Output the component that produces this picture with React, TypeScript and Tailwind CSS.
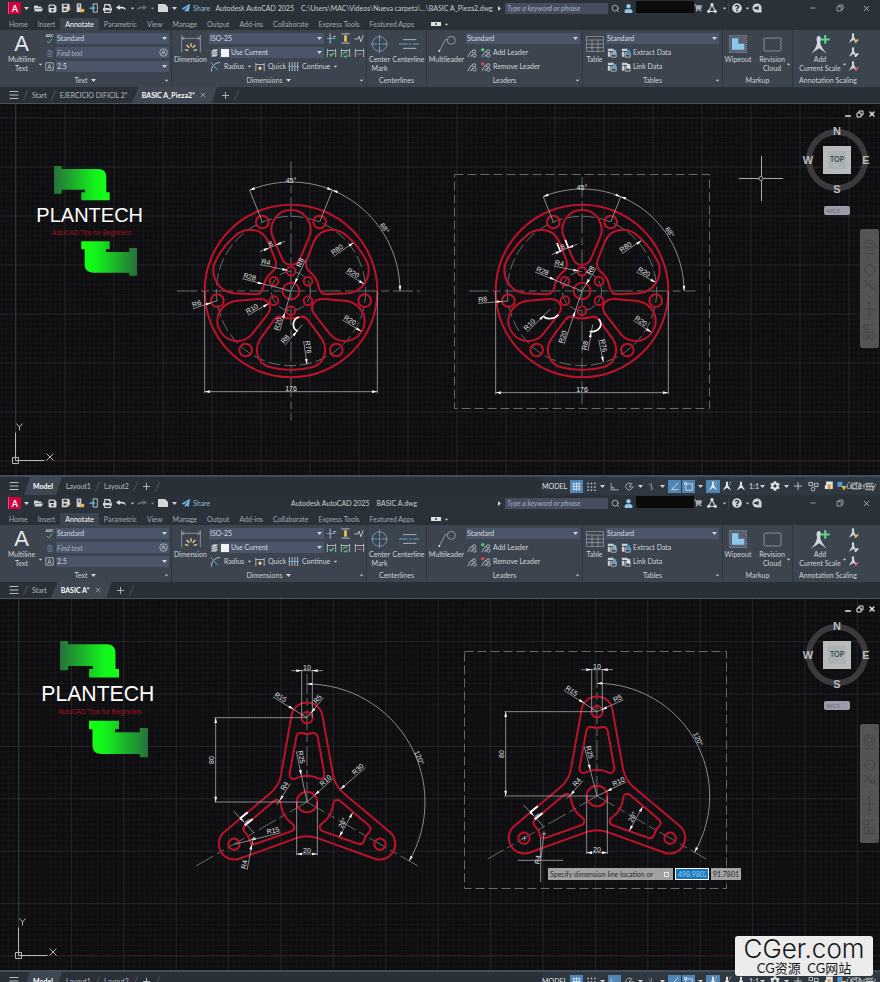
import type { ReactNode } from "react";
import clsx from "clsx";
import {
  FaCog,
  FaFolderOpen,
  FaPaperPlane,
  FaPrint,
  FaQuestionCircle,
  FaSave,
  FaShoppingCart,
  FaUser,
} from "react-icons/fa";
import { Menu, Minus, Plus, Search, X } from "lucide-react";

type Pt = [number, number];

interface LeaderSpec {
  label: string;
  tail: Pt;
  head: Pt;
  to?: Pt;
}

/* ---------- small shared bits ---------- */

function Caret({ className }: { className?: string }) {
  return (
    <svg viewBox="0 0 10 6" className={clsx("w-[5px] h-[3px] shrink-0 fill-[#cfd3d8]", className)}>
      <path d="M0 0h10L5 6z" />
    </svg>
  );
}

function Slash() {
  return <span className="w-px h-[11px] mx-0.5 bg-[#4a525d] rotate-[24deg] shrink-0" />;
}

function Glyph({ children, className }: { children: ReactNode; className?: string }) {
  return (
    <svg
      viewBox="0 0 24 24"
      className={clsx("shrink-0 fill-none stroke-[#c3c8ce] stroke-2", className ?? "w-[11px] h-[11px]")}
    >
      {children}
    </svg>
  );
}

function IconButton({ label, className, children }: { label: string; className?: string; children: ReactNode }) {
  return (
    <button type="button" aria-label={label} className={clsx("flex items-center justify-center shrink-0", className)}>
      {children}
    </button>
  );
}

function Combo({ label, value, className }: { label: string; value: string; className?: string }) {
  return (
    <div className={clsx("relative h-[11px]", className)}>
      <select aria-label={label} className="block appearance-none w-full h-[11px] pl-px leading-[11px] bg-[#4b556a] text-[#d5d9df]">
        <option>{value}</option>
      </select>
      <Caret className="absolute right-[2px] top-1 pointer-events-none" />
    </div>
  );
}

/* ---------- title bar ---------- */

function CurvedArrow({ className }: { className: string }) {
  return (
    <svg viewBox="0 0 24 14" className={clsx("w-[10px] h-[6px]", className)}>
      <path d="M0 6L9 0v4h5c6 0 9 3 10 9-3-4-6-5-10-5H9v4z" />
    </svg>
  );
}

function TitleBar({ file }: { file: string }) {
  return (
    <header className="flex items-center h-4 bg-[#2b3139] text-[#c9cdd2]">
      <IconButton label="Application menu" className="w-[13px] h-[12px] ml-2 bg-[#d3003f] border-l border-[#f04478]">
        <span className="text-[9px] leading-none font-bold text-white">A</span>
      </IconButton>
      <Caret className="mx-[3px]" />
      <div className="flex w-[96px] text-[9px] text-[#d4d7da]">
        <IconButton label="Open" className="flex-1"><FaFolderOpen /></IconButton>
        <IconButton label="Save" className="flex-1"><FaSave /></IconButton>
        <IconButton label="Save as" className="flex-1">
          <Glyph className="w-[10px] h-[10px]">
            <path className="fill-[#d4d7da] stroke-none" d="M2 2h16l3 3v8l-8 9H2z" />
            <path className="fill-[#2b3139] stroke-none" d="M6 4h9v5H6zM6 13h7v5H6z" />
            <path className="stroke-[#e0b45c] stroke-4" d="M14 21l8-8" />
          </Glyph>
        </IconButton>
        <IconButton label="Open from web" className="flex-1">
          <Glyph className="w-[10px] h-[10px]">
            <path className="fill-[#c9cdd1] stroke-none" d="M4 1h11v21H4z" />
            <path className="stroke-[#2b3139]" d="M7 5h5M7 9h5" />
            <path className="fill-[#e0b45c] stroke-none" d="M12 14h10v8H12z" />
          </Glyph>
        </IconButton>
        <IconButton label="Save to mobile" className="flex-1">
          <Glyph className="w-[10px] h-[10px]">
            <path className="stroke-[#d4d7da]" d="M10 2h10v20H10z" />
            <path className="stroke-[#62b6e8] stroke-3" d="M1 12h12M9 8l4 4-4 4" />
          </Glyph>
        </IconButton>
        <IconButton label="Plot" className="flex-1"><FaPrint /></IconButton>
        <IconButton label="Undo" className="flex-1"><CurvedArrow className="fill-[#e0e2e5]" /></IconButton>
      </div>
      <span className="flex justify-center w-2"><Caret className="scale-75" /></span>
      <IconButton label="Redo" className="w-3"><CurvedArrow className="fill-[#666d76] -scale-x-100" /></IconButton>
      <span className="flex justify-center w-2"><Caret className="scale-75 opacity-60" /></span>
      <IconButton label="Sheet set" className="w-[13px]">
        <svg viewBox="0 0 20 16" className="w-[10px] h-2 fill-[#d4d7da]"><path d="M0 0h14l6 6v10H0z" /></svg>
      </IconButton>
      <span className="flex justify-center w-[10px]"><Caret /></span>
      <button type="button" className="flex items-center gap-[3px] ml-[3px] text-[#8fb8d6]">
        <FaPaperPlane className="text-[8px] text-[#6cb9ea]" />
        Share
      </button>
      <h1 className="flex-1 flex justify-center gap-[7px] whitespace-nowrap">
        <span>Autodesk AutoCAD 2025</span>
        <span>{file}</span>
      </h1>
      <svg viewBox="0 0 6 10" className="w-[3px] h-[5px] mr-1 fill-[#cfd3d8]"><path d="M0 0l6 5-6 5z" /></svg>
      <input
        aria-label="Search help"
        placeholder="Type a keyword or phrase"
        className="w-[103px] h-[11px] pl-0.5 bg-[#444e60] italic placeholder:text-[#a9b0bb]"
      />
      <IconButton label="Search" className="w-[14px]"><Search className="w-[9px] h-[9px]" /></IconButton>
      <IconButton label="Account" className="w-[13px] text-[9px] text-[#8cc8ec]"><FaUser /></IconButton>
      <span className="w-[58px] h-3 ml-px mb-0.5 bg-[#0b0b0c]" />
      <IconButton label="App store" className="w-2 text-[8px] text-[#a7acb3]"><FaShoppingCart /></IconButton>
      <IconButton label="Autodesk apps" className="w-[20px]">
        <Glyph className="w-[10px] h-[10px]">
          <path className="stroke-3" d="M12 4L4 20h16z" />
          <path className="fill-[#d4d7da] stroke-none" d="M12 0a4 4 0 010 8 4 4 0 010-8zM4 16a4 4 0 010 8 4 4 0 010-8zM20 16a4 4 0 010 8 4 4 0 010-8z" />
        </Glyph>
      </IconButton>
      <Caret className="scale-75" />
      <span className="w-px h-[11px] mx-px bg-[#3c434d]" />
      <IconButton label="Help" className="w-[13px] text-[10px] text-[#d0d3d7]"><FaQuestionCircle /></IconButton>
      <span className="flex justify-center w-2"><Caret className="scale-75" /></span>
      <IconButton label="Feedback" className="w-[12px]">
        <Glyph className="w-[10px] h-[10px]">
          <path className="fill-[#d0d3d7] stroke-none" d="M12 1a11 11 0 0111 11v11H12A11 11 0 0112 1z" />
          <path className="fill-[#2b3139] stroke-none" d="M5 11l11-4v10l-11-3z" />
        </Glyph>
      </IconButton>
      <div className="flex ml-9">
        <IconButton label="Minimize" className="w-[27px]"><Minus className="w-2 h-2" /></IconButton>
        <IconButton label="Restore" className="w-[27px]">
          <Glyph className="w-2 h-2"><path d="M3 8h13v13H3zM8 8V3h13v13h-5" /></Glyph>
        </IconButton>
        <IconButton label="Close" className="w-[27px]"><X className="w-[9px] h-[9px]" /></IconButton>
      </div>
    </header>
  );
}

/* ---------- ribbon ---------- */

const RIBBON_TABS = [
  "Home", "Insert", "Annotate", "Parametric", "View", "Manage", "Output",
  "Add-ins", "Collaborate", "Express Tools", "Featured Apps",
];

function RibbonTabs() {
  return (
    <nav className="flex items-end h-[14px] pl-1 bg-[#2b3139] text-[#a3a9b1]">
      {RIBBON_TABS.map((tab) => (
        <button
          key={tab}
          type="button"
          className={clsx(
            "h-3 px-[5px] leading-3 whitespace-nowrap",
            tab === "Annotate" && "bg-[#3b444f] text-white",
          )}
        >
          {tab}
        </button>
      ))}
      <IconButton label="Ribbon display" className="h-3 ml-3 gap-[3px]">
        <span className="flex items-center justify-center w-[10px] h-1 bg-[#dfe2e5]">
          <span className="w-0.5 h-0.5 bg-[#59616c]" />
        </span>
        <Caret className="scale-75" />
      </IconButton>
    </nav>
  );
}

interface PanelProps {
  title: string;
  className: string;
  caret?: boolean;
  launcher?: boolean;
  children: ReactNode;
}

function Panel({ title, className, caret, launcher, children }: PanelProps) {
  return (
    <section className={clsx("flex flex-col border-r border-[#2f363f] shrink-0", className)}>
      <div className="flex flex-1 pt-[3px]">{children}</div>
      <footer className="relative flex items-center justify-center gap-1 h-[13px] text-[#cdd1d6]">
        {title}
        {caret && <Caret />}
        {launcher && <Caret className="absolute right-[2px] top-[5px] scale-75" />}
      </footer>
    </section>
  );
}

function BigButton({ lines, icon, className, caret }: { lines: string[]; icon: ReactNode; className: string; caret?: boolean }) {
  return (
    <button type="button" className={clsx("relative flex flex-col items-center shrink-0 text-[#d0d4d9]", className)}>
      <span className="flex items-center justify-center h-[22px]">{icon}</span>
      {lines.map((line) => (
        <span key={line} className="leading-[9px] whitespace-nowrap">{line}</span>
      ))}
      {caret && <Caret className="absolute right-0 top-[30px] scale-75" />}
    </button>
  );
}

function DimIcon({ mark, tone }: { mark: string; tone: string }) {
  return (
    <Glyph className="w-[11px] h-[10px]">
      <path d="M2 2v20M22 2v20M2 6h20" />
      <path className={tone} d={mark} />
    </Glyph>
  );
}

function LeaderIcon({ accent }: { accent?: string }) {
  return (
    <Glyph className="w-[10px] h-[10px]">
      <path d="M2 22L9 9h4M9 22l3-6h2" />
      <circle cx="17" cy="8" r="4" />
      <circle cx="18" cy="18" r="4" />
      {accent && <circle cx="4" cy="4" r="4" className={clsx("stroke-none", accent)} />}
    </Glyph>
  );
}

function TableIcon({ accent }: { accent: string }) {
  return (
    <Glyph className="w-[10px] h-[10px]">
      <path className="fill-[#c9cdd2] stroke-none" d="M2 2h14v5H2zM2 9h6v12H2z" />
      <path d="M10 11h12v11H10zM10 15h12" />
      <path className={clsx("stroke-none", accent)} d="M14 5h8v10h-8z" />
    </Glyph>
  );
}

function ScaleIcon({ tone }: { tone: string }) {
  return (
    <Glyph>
      <path className="fill-[#d0d4d9] stroke-none" d="M11 0c3 0 3 5 2 8l7 13-8-6-10 6 7-12c-1-4-1-9 2-9z" />
      <path className={clsx("stroke-4", tone)} d="M15 21l7-7" />
    </Glyph>
  );
}

function Ribbon() {
  return (
    <div className="flex h-[57px] bg-[#3b444f] text-[#d0d4d9] overflow-hidden">
      <Panel title="Text" className="w-[172px]" caret launcher>
        <BigButton
          className="w-[43px]"
          lines={["Multiline", "Text"]}
          caret
          icon={<span className="text-[22px] leading-[22px] font-['Liberation_Sans',sans-serif] text-[#e3e5e8]">A</span>}
        />
        <div className="flex flex-col flex-1 gap-[3px] pr-0.5">
          <div className="flex items-center">
            <IconButton label="Check spelling" className="w-[13px]">
              <span className="flex flex-col items-center">
                <span className="text-[4px] leading-[4px] font-bold">ABC</span>
                <Glyph className="w-[7px] h-[6px]"><path className="stroke-[#52c46b] stroke-4" d="M2 12l7 8L22 3" /></Glyph>
              </span>
            </IconButton>
            <Combo label="Text style" value="Standard" className="flex-1" />
          </div>
          <div className="flex items-center">
            <IconButton label="Find" className="w-[13px]">
              <Glyph className="w-2 h-[10px]">
                <path className="stroke-[#6f99b8]" d="M6 6h12v17H6zM10 1v5" />
                <path className="stroke-[#8d96a1]" d="M9 12h6M9 17h6" />
              </Glyph>
            </IconButton>
            <div className="flex items-center flex-1 h-[11px] bg-[#4b556a]">
              <input aria-label="Find text" placeholder="Find text" className="flex-1 min-w-0 h-[11px] pl-px italic placeholder:text-[#a8afbb]" />
              <Glyph className="w-[9px] h-[9px] mr-px">
                <circle cx="12" cy="12" r="10" />
                <path d="M7 17l5-11 5 11M9 13h6" />
              </Glyph>
            </div>
          </div>
          <div className="flex items-center">
            <IconButton label="Text height" className="w-[13px]">
              <Glyph className="w-[9px] h-[9px]"><path d="M2 2h20v20H2zM7 19l5-13 5 13M9 15h6" /></Glyph>
            </IconButton>
            <Combo label="Annotation text height" value="2.5" className="flex-1" />
          </div>
        </div>
      </Panel>

      <Panel title="Dimensions" className="w-[195px]" caret launcher>
        <BigButton
          className="w-[37px]"
          lines={["Dimension"]}
          icon={
            <svg viewBox="0 0 60 54" className="w-[20px] h-[18px] fill-none stroke-[#aeb4bb] stroke-2">
              <path d="M2 0v52M58 0v52M2 10h56M10 5l-8 5 8 5M50 5l8 5-8 5" />
              <path className="stroke-[#f0cf86] stroke-4" d="M12 44l10 2M17 30l8 8M30 25v10M43 30l-8 8M48 44l-10 2" />
            </svg>
          }
        />
        <div className="flex flex-col gap-[3px]">
          <div className="flex items-center">
            <Combo label="Dimension style" value="ISO-25" className="w-[115px]" />
            <div className="flex w-[41px] ml-px">
              <IconButton label="Break" className="flex-1"><Glyph><path d="M9 1v22M15 8h7" /><path className="stroke-[#67aee0]" d="M2 12h18" /></Glyph></IconButton>
              <IconButton label="Adjust space" className="flex-1"><Glyph><path d="M3 2h18M3 22h18" /><path className="stroke-[#e6c052] stroke-6" d="M12 5v14" /></Glyph></IconButton>
              <IconButton label="Jog line" className="flex-1"><Glyph><path d="M1 13h7l3-6 4 12 5-14" /></Glyph></IconButton>
            </div>
          </div>
          <div className="flex items-center">
            <span className="flex justify-center w-[10px]">
              <Glyph className="w-[9px] h-[9px]"><path className="fill-[#d0d4d9] stroke-[#59626e] stroke-1" d="M2 23l6-7h14l-6 7zM2 17l6-7h14l-6 7zM2 11l6-8h14l-6 8z" /></Glyph>
            </span>
            <span className="w-[11px] h-[11px] p-0.5 bg-[#4b556a]"><span className="block w-2 h-2 bg-[#f1f1ef]" /></span>
            <Combo label="Dimension layer" value="Use Current" className="w-[94px]" />
            <div className="flex w-[41px] ml-px">
              <IconButton label="Inspect" className="flex-1"><DimIcon tone="stroke-[#59c374] stroke-3" mark="M7 14l4 5 7-8" /></IconButton>
              <IconButton label="Update" className="flex-1"><DimIcon tone="stroke-[#59c374] stroke-3" mark="M7 15a5 5 0 019-3M17 16a5 5 0 01-9 3" /></IconButton>
              <IconButton label="Reassociate" className="flex-1"><DimIcon tone="stroke-[#a86a70] stroke-3" mark="M7 15h10" /></IconButton>
            </div>
          </div>
          <div className="flex items-center h-[11px]">
            <button type="button" className="flex items-center gap-[3px] pl-px w-[38px]">
              <Glyph><path d="M3 23C3 13 9 4 22 3" /><path className="stroke-[#67aee0]" d="M2 3l15 17" /></Glyph>
              Radius
            </button>
            <Caret className="scale-75" />
            <button type="button" className="flex items-center gap-[3px] pl-[3px] w-[36px]">
              <Glyph className="w-[10px] h-[10px]"><path d="M2 2v20M22 2v20M2 6h20" /><path className="stroke-[#f0cf86] stroke-4" d="M12 11v8M8 15h8" /></Glyph>
              Quick
            </button>
            <button type="button" className="flex items-center gap-[3px] w-[45px]">
              <Glyph><path d="M3 2v20M9 2v20M15 2v20M21 2v20" /><path className="stroke-[#67aee0]" d="M0 12h24" /></Glyph>
              Continue
            </button>
            <Caret className="scale-75" />
          </div>
        </div>
      </Panel>

      <Panel title="Centerlines" className="w-[60px]">
        <BigButton
          className="w-[25px]"
          lines={["Center", "Mark"]}
          icon={
            <svg viewBox="0 0 50 54" className="w-[17px] h-[18px] fill-none stroke-[#a9b0b8] stroke-2">
              <circle cx="25" cy="27" r="22" />
              <path className="stroke-[#62a3cf] stroke-3" d="M25 0v20M25 34v20M0 27h18M32 27h18M21 27h8M25 23v8" />
            </svg>
          }
        />
        <BigButton
          className="w-[33px]"
          lines={["Centerline"]}
          icon={
            <svg viewBox="0 0 60 54" className="w-[20px] h-[18px] fill-none stroke-[#a9b0b8] stroke-3">
              <path d="M12 14h40M12 40h40" />
              <path className="stroke-[#62a3cf]" d="M0 27h26M30 27h6M40 27h20" />
            </svg>
          }
        />
      </Panel>

      <Panel title="Leaders" className="w-[156px]" launcher>
        <BigButton
          className="w-[39px]"
          lines={["Multileader"]}
          icon={
            <svg viewBox="0 0 54 54" className="w-[18px] h-[18px] fill-none stroke-[#b9bfc6] stroke-2">
              <circle cx="40" cy="16" r="12" />
              <path d="M4 48L22 14h6" />
              <circle cx="4" cy="48" r="3" className="fill-[#e3e5e8] stroke-none" />
            </svg>
          }
        />
        <div className="flex flex-col gap-[3px]">
          <Combo label="Leader style" value="Standard" className="w-[114px]" />
          <div className="flex items-center h-[11px] pl-px">
            <IconButton label="Align" className="w-[14px] pr-1"><LeaderIcon /></IconButton>
            <button type="button" className="flex items-center gap-0.5"><LeaderIcon accent="fill-[#4fd07c]" />Add Leader</button>
          </div>
          <div className="flex items-center h-[11px] pl-px">
            <IconButton label="Collect" className="w-[14px] pr-1"><LeaderIcon /></IconButton>
            <button type="button" className="flex items-center gap-0.5"><LeaderIcon accent="fill-[#e0455c]" />Remove Leader</button>
          </div>
        </div>
      </Panel>

      <Panel title="Tables" className="w-[140px]" launcher>
        <BigButton
          className="w-[23px]"
          lines={["Table"]}
          icon={
            <svg viewBox="0 0 54 48" className="w-[18px] h-4 fill-none stroke-[#aab0b7] stroke-2">
              <path d="M1 1h52v46H1zM1 12h52M1 24h52M1 35h52M18 12v35M36 12v35" />
            </svg>
          }
        />
        <div className="flex flex-col gap-[3px]">
          <Combo label="Table style" value="Standard" className="w-[113px]" />
          <div className="flex items-center h-[11px] pl-px">
            <IconButton label="Download from source" className="w-[14px] pr-1"><TableIcon accent="fill-[#7db6dc]" /></IconButton>
            <button type="button" className="flex items-center gap-0.5"><TableIcon accent="fill-[#3f8fca]" />Extract Data</button>
          </div>
          <div className="flex items-center h-[11px] pl-px">
            <IconButton label="Upload to source" className="w-[14px] pr-1"><TableIcon accent="fill-[#5c9fd0]" /></IconButton>
            <button type="button" className="flex items-center gap-0.5"><TableIcon accent="fill-[#e1e3e6]" />Link Data</button>
          </div>
        </div>
      </Panel>

      <Panel title="Markup" className="w-[70px]">
        <BigButton
          className="w-[30px]"
          lines={["Wipeout"]}
          icon={
            <svg viewBox="0 0 54 54" className="w-[18px] h-[18px]">
              <rect x="1" y="1" width="52" height="52" className="fill-[#59626d] stroke-[#a9b0b8] stroke-2 [stroke-dasharray:3_3]" />
              <path className="fill-[#8ac6ee]" d="M9 10h19v16h18v18H9z" />
            </svg>
          }
        />
        <BigButton
          className="w-[38px]"
          lines={["Revision", "Cloud"]}
          caret
          icon={
            <svg viewBox="0 0 56 44" className="w-[19px] h-[15px] fill-none stroke-[#b4bac1] stroke-2">
              <path d="M4 4q4-4 8 0q4-4 8 0q4-4 8 0q4-4 8 0q4-4 8 0q4-4 8 0q4 4 0 9q4 4 0 9q4 4 0 9q4 4 0 9q-4 4-8 0q-4 4-8 0q-4 4-8 0q-4 4-8 0q-4 4-8 0q-4 4-8 0q-4-4 0-9q-4-4 0-9q-4-4 0-9q-4-4 0-9z" />
            </svg>
          }
        />
      </Panel>

      <section className="flex flex-col w-[70px]">
        <div className="flex flex-1 pt-[3px]">
          <BigButton
            className="w-[54px]"
            lines={["Add", "Current Scale"]}
            caret
            icon={
              <svg viewBox="0 0 56 56" className="w-[19px] h-[19px]">
                <path className="fill-[#d4d7da]" d="M23 3c7 0 8 9 4 18 3 12 8 21 20 34L24 39 0 55c12-13 16-22 18-34-3-9-2-18 5-18z" />
                <path className="stroke-[#5cd88a] stroke-[6px]" d="M42 0v26M29 13h26" />
              </svg>
            }
          />
          <div className="flex flex-col gap-[3px] pl-px">
            <IconButton label="Scale list" className="h-[11px]"><ScaleIcon tone="stroke-[#e6b558]" /></IconButton>
            <IconButton label="Sync scales" className="h-[11px]"><ScaleIcon tone="stroke-[#e3e5e8]" /></IconButton>
            <IconButton label="Delete scales" className="h-[11px]"><ScaleIcon tone="stroke-[#d8556a]" /></IconButton>
          </div>
        </div>
        <footer className="flex items-center justify-center h-[13px] whitespace-nowrap">Annotation Scaling</footer>
      </section>
    </div>
  );
}

/* ---------- drawing tabs ---------- */

function FileTabs({ files, active }: { files: string[]; active: string }) {
  return (
    <nav className="flex items-center h-[17px] border-b border-[#4a525c] bg-[#2a3038] text-[#b4bac1]">
      <IconButton label="File tab menu" className="w-[23px] pl-1"><Menu className="w-3 h-3" /></IconButton>
      <Slash />
      <button type="button" className="px-1">Start</button>
      {files.map((file) => (
        <span key={file} className="flex items-center h-full">
          <Slash />
          <button type="button" className="px-1">{file}</button>
        </span>
      ))}
      <span className="flex items-center self-stretch gap-1 px-2.5 bg-[#3f4852] [clip-path:polygon(7px_0,100%_0,calc(100%-5px)_100%,0_100%)]">
        <button type="button" className="font-bold text-white">{active}</button>
        <IconButton label="Close tab"><X className="w-2 h-2" /></IconButton>
      </span>
      <IconButton label="New tab" className="w-[17px]"><Plus className="w-[11px] h-[11px]" /></IconButton>
      <Slash />
    </nav>
  );
}

/* ---------- drafting primitives, three units to the pixel ---------- */

const heading = (a: Pt, b: Pt) => (Math.atan2(b[1] - a[1], b[0] - a[0]) * 180) / Math.PI;

function Arrow({ at, angle }: { at: Pt; angle: number }) {
  return <path d="M0 0l-16-4v8z" className="fill-white stroke-none" transform={`translate(${at[0]} ${at[1]}) rotate(${angle})`} />;
}

function Label({ at, angle = 0, children }: { at: Pt; angle?: number; children: ReactNode }) {
  return (
    <text
      textAnchor="middle"
      transform={`translate(${at[0]} ${at[1]}) rotate(${angle})`}
      className="text-[21px] font-['Liberation_Sans',sans-serif] fill-[#e2e3e5] stroke-none"
    >
      {children}
    </text>
  );
}

function Line({ a, b, className }: { a: Pt; b: Pt; className?: string }) {
  return <line x1={a[0]} y1={a[1]} x2={b[0]} y2={b[1]} className={className} />;
}

function Leader({ label, tail, head, to }: LeaderSpec) {
  const angle = heading(tail, head);
  const rad = (angle * Math.PI) / 180;
  const upright = angle > 90 ? angle - 180 : angle < -90 ? angle + 180 : angle;
  const up = (upright * Math.PI) / 180;
  const reach = label.length > 2 ? 20 : 15;
  const at: Pt = [
    tail[0] + Math.cos(rad) * reach + Math.sin(up) * 4,
    tail[1] + Math.sin(rad) * reach - Math.cos(up) * 4,
  ];
  return (
    <g>
      <Line a={tail} b={to ?? head} />
      <Arrow at={head} angle={angle} />
      <Label at={at} angle={upright}>{label}</Label>
    </g>
  );
}

function Span({ a, b }: { a: Pt; b: Pt }) {
  return (
    <g>
      <Line a={a} b={b} />
      <Arrow at={a} angle={heading(b, a)} />
      <Arrow at={b} angle={heading(a, b)} />
    </g>
  );
}

const THIN = "fill-none stroke-[#a6a8ab] stroke-[2.4px]";
const RED = "fill-none stroke-[#bd1229] stroke-[6px]";
const AXIS = "stroke-[#7d8083] [stroke-dasharray:60_12_24_12]";
const RING = "stroke-[#7d8083] [stroke-dasharray:36_12]";

/* ---------- wheel ---------- */

const WHEEL_UPPER =
  "M47-93L68-147C80-175 98-184 124-184C142-183 158-175 168-165A243 243 0 0 1 231-80C240-40 215 3 171 7L108 10C92 10 86 0 84-9A85 85 0 0 0 52-62C44-70 44-82 47-93Z";
const WHEEL_LOWER =
  "M71 71C52 46 70 22 98 24L162 29C196 32 222 60 221 92C221 100 219 106 217 111C200 154 148 163 118 131Z";
const WHEEL_TOP = "M-27-97L-54-160A59 59 0 1 1 54-160L27-97A29 29 0 0 1-27-97Z";
const WHEEL_BOTTOM =
  "M-24 79A85 85 0 0 0 24 79C36 74 44 78 50 86L94 146C112 176 100 220 62 229A240 240 0 0 1-62 229C-100 220-112 176-94 146L-50 86C-44 78-36 74-24 79Z";

const BOLTS: Pt[] = [[-86, -207], [86, -207], [221, 29], [-221, 29], [136, 177], [-136, 177]];
const PINS: Pt[] = [[0, -59], [51, -29], [51, 29], [0, 59], [-51, 29], [-51, -29]];

interface WheelProps {
  x: number;
  y: number;
  arc: number;
  bottom: number;
  axes: [Pt, Pt, Pt, Pt];
  web: Pt;
  leaders: LeaderSpec[];
  marks: string[];
}

function Wheel({ x, y, arc, bottom, axes, web, leaders, marks }: WheelProps) {
  const ax = arc * 0.38;
  const ay = -arc * 0.925;
  return (
    <g transform={`translate(${x} ${y}) scale(${1 / 3})`}>
      <g className={THIN}>
        <Line a={axes[0]} b={axes[1]} className={AXIS} />
        <Line a={axes[2]} b={axes[3]} className={AXIS} />
        <circle r="224" className={RING} />
        <circle r="59" className={RING} />
      </g>
      <g className={RED}>
        <circle r="259" />
        <circle r="25" />
        {BOLTS.map(([cx, cy]) => <circle key={`${cx},${cy}`} cx={cx} cy={cy} r="19" />)}
        {PINS.map(([cx, cy]) => <circle key={`${cx},${cy}`} cx={cx} cy={cy} r="13" />)}
        <path d={WHEEL_TOP} />
        <path d={WHEEL_BOTTOM} />
        {[1, -1].map((side) => (
          <g key={side} transform={`scale(${side} 1)`}>
            <path d={WHEEL_UPPER} />
            <path d={WHEEL_LOWER} />
          </g>
        ))}
      </g>
      <g className={THIN}>
        <path d={`M${-ax} ${ay}A${arc} ${arc} 0 0 1 ${arc} 0`} />
        <Arrow at={[-ax, ay]} angle={160} />
        <Arrow at={[ax, ay]} angle={20} />
        <Arrow at={[ax, ay]} angle={200} />
        <Arrow at={[arc, 0]} angle={90} />
        <Line a={[-ax, ay]} b={[-86, -207]} />
        <Line a={[ax, ay]} b={[86, -207]} />
        <Label at={[0, -arc + 2]}>45°</Label>
        <Label at={[arc * 0.84, -arc * 0.565]} angle={56}>68°</Label>
        <Line a={[-259, 0]} b={[-259, bottom + 5]} />
        <Line a={[259, 0]} b={[259, bottom + 5]} />
        <Span a={[-259, bottom]} b={[259, bottom]} />
        <Label at={[0, bottom - 3]}>176</Label>
        <g transform={`translate(${web[0]} ${web[1]})`}>
          <Line a={[-38, 15]} b={[38, -16]} />
          <Arrow at={[-10, 4]} angle={-22} />
          <Arrow at={[11, -5]} angle={158} />
          <Label at={[-2, -2]} angle={-22}>8</Label>
        </g>
        {leaders.map((l) => <Leader key={l.label + l.tail.join()} {...l} />)}
        {marks.map((d) => <path key={d} d={d} className="stroke-white stroke-[5px]" />)}
      </g>
    </g>
  );
}

const WHEEL_A: LeaderSpec[] = [
  { label: "R4", tail: [-92, -79], head: [-10, -62] },
  { label: "R28", tail: [-146, -37], head: [-84, -21], to: [0, 0] },
  { label: "R8", tail: [44, -94], head: [11, -22], to: [0, 0] },
  { label: "R20", tail: [-34, 121], head: [-19, 64], to: [0, 0] },
  { label: "R80", tail: [128, -104], head: [188, -145] },
  { label: "R20", tail: [163, -55], head: [219, -21] },
  { label: "R20", tail: [154, 87], head: [211, 121] },
  { label: "R6", tail: [-294, 53], head: [-239, 35], to: [-221, 29] },
  { label: "R10", tail: [-129, 73], head: [-68, 38] },
  { label: "R8", tail: [-19, 163], head: [18, 121], to: [34, 101] },
  { label: "R76", tail: [38, 150], head: [48, 220] },
];

const WHEEL_B: LeaderSpec[] = [
  { label: "R4", tail: [-85, -75], head: [-10, -60] },
  { label: "R28", tail: [-141, -57], head: [-81, -34], to: [0, 0] },
  { label: "R8", tail: [43, -69], head: [12, -20], to: [0, 0] },
  { label: "R20", tail: [-54, 160], head: [-20, 60], to: [0, 0] },
  { label: "R80", tail: [120, -112], head: [178, -151] },
  { label: "R20", tail: [163, -57], head: [221, -26] },
  { label: "R20", tail: [154, 88], head: [208, 124] },
  { label: "R6", tail: [-312, 37], head: [-240, 31], to: [-222, 30] },
  { label: "R10", tail: [-164, 123], head: [-114, 73], to: [-95, 54] },
  { label: "R8", tail: [18, 180], head: [27, 123], to: [32, 101] },
  { label: "R76", tail: [50, 146], head: [64, 213] },
];

/* ---------- three-arm bracket ---------- */

const ARM = "M-78-82L-46-261A47 47 0 0 1 46-261L78-82A95 95 0 0 0 110-26";
const POCKET =
  "M-32-195C-30-205-24-208-16-207Q0-202 16-207C24-208 30-205 32-195L52-86C54-72 44-66 34-71Q0-86-34-71C-44-66-54-72-52-86Z";

interface BracketProps {
  x: number;
  y: number;
  arc: number;
  tip: number;
  top: number;
  base: number;
  angleLabel: Pt;
  leaders: LeaderSpec[];
  children?: ReactNode;
}

function Bracket({ x, y, arc, tip, top, base, angleLabel, leaders, children }: BracketProps) {
  return (
    <g transform={`translate(${x} ${y}) scale(${1 / 3})`}>
      <g className={THIN}>
        <Line a={[0, 0]} b={[0, top]} className={AXIS} />
        <Line a={[0, 0]} b={[-tip, tip * 0.577]} className={AXIS} />
        <Line a={[0, 0]} b={[tip, tip * 0.577]} className={AXIS} />
      </g>
      <g className={RED}>
        <circle r="31" />
        {[0, 120, 240].map((turn) => (
          <g key={turn} transform={`rotate(${turn})`}>
            <path d={ARM} />
            <path d={POCKET} />
            <circle cy="-253" r="17" />
          </g>
        ))}
      </g>
      <g className={THIN}>
        <path d={`M0 ${-arc}A${arc} ${arc} 0 0 1 ${arc * 0.866} ${arc * 0.5}`} />
        <Arrow at={[0, -arc]} angle={180} />
        <Arrow at={[arc * 0.866, arc * 0.5]} angle={118} />
        <Label at={angleLabel} angle={66}>120°</Label>

        <Line a={[-16, top - 3]} b={[-16, -253]} />
        <Line a={[16, top - 3]} b={[16, -253]} />
        <Line a={[-47, top]} b={[48, top]} />
        <Arrow at={[-16, top]} angle={0} />
        <Arrow at={[16, top]} angle={180} />
        <Label at={[0, top - 3]}>10</Label>

        <Line a={[-278, -253]} b={[0, -253]} />
        <Line a={[-278, 0]} b={[0, 0]} />
        <Span a={[-274, -253]} b={[-274, 0]} />
        <Label at={[-278, -126]} angle={-90}>80</Label>

        <Line a={[-31, 0]} b={[-31, base + 4]} />
        <Line a={[31, 0]} b={[31, base + 4]} />
        <Span a={[-31, base]} b={[31, base]} />
        <Label at={[0, base - 3]}>20</Label>

        <Span a={[137, 32]} b={[97, 104]} />
        <Label at={[113, 66]} angle={-62}>20°</Label>

        <Line a={[-220, 27]} b={[-160, 92]} />
        <Arrow at={[-189, 60]} angle={47} />
        <path d="M-200 49l22-18M-187 70l24-19" className="stroke-white stroke-[6px]" />
        <Label at={[-183, 64]} angle={50}>8</Label>

        {leaders.map((l) => <Leader key={l.label + l.tail.join()} {...l} />)}
        {children}
      </g>
    </g>
  );
}

const BRACKET_A: LeaderSpec[] = [
  { label: "R15", tail: [-102, -315], head: [-40, -278], to: [0, -253] },
  { label: "R5", tail: [50, -313], head: [12, -267], to: [0, -253] },
  { label: "R25", tail: [-32, -152], head: [-17, -80], to: [0, 0] },
  { label: "R10", tail: [78, -70], head: [23, -21], to: [0, 0] },
  { label: "R30", tail: [175, -103], head: [100, -38] },
  { label: "R4", tail: [-50, -55], head: [-82, -4], to: [-90, 8] },
  { label: "R15", tail: [-80, 92], head: [-170, 113], to: [-218, 127] },
  { label: "R4", tail: [-180, 204], head: [-166, 127], to: [-160, 104] },
];

const BRACKET_B: LeaderSpec[] = [
  { label: "R15", tail: [-99, -317], head: [-39, -279], to: [0, -253] },
  { label: "R5", tail: [80, -289], head: [14, -259], to: [0, -253] },
  { label: "R25", tail: [-38, -148], head: [-20, -78], to: [0, 0] },
  { label: "R10", tail: [87, -42], head: [29, -14], to: [0, 0] },
  { label: "R4", tail: [-42, -46], head: [-80, -2], to: [-90, 8] },
];

/* ---------- model space ---------- */

function PipeLogo({ id, x, y, scale }: { id: string; x: number; y: number; scale: number }) {
  const pipe = "M0 0H23V9H132Q157 9 157 34V79H167V103H82V79H93V71H23V83H0Z";
  return (
    <g transform={`translate(${x} ${y}) scale(${scale / 3})`}>
      <defs>
        <linearGradient id={id}>
          <stop offset="0" stopColor="#26703a" />
          <stop offset="0.75" stopColor="#12f51a" />
          <stop offset="1" stopColor="#16ff16" />
        </linearGradient>
      </defs>
      <path d={pipe} fill={`url(#${id})`} />
      <path d={pipe} fill={`url(#${id})`} transform="translate(249 329) rotate(180)" />
      <text x="-53" y="169" className="text-[60px] font-['Liberation_Sans',sans-serif] fill-white">PLANTECH</text>
      <text x="-6" y="206" className="text-[19px] font-['Liberation_Sans',sans-serif] fill-[#a51226]">
        AutoCAD Tips for Beginners
      </text>
    </g>
  );
}

interface ModelSpaceProps {
  id: string;
  originX: number;
  originY: number;
  cell: number;
  children: ReactNode;
  overlay?: ReactNode;
}

function ModelSpace({ id, originX, originY, cell, children, overlay }: ModelSpaceProps) {
  const minor = cell / 10;
  return (
    <main className="relative h-[371px] bg-[#0e0e10] overflow-hidden">
      <svg className="block w-full h-full">
        <defs>
          <pattern id={`${id}-minor`} x={originX} y={originY} width={minor} height={minor} patternUnits="userSpaceOnUse">
            <path d={`M0 0H${minor}M0 0V${minor}`} className="fill-none stroke-[#1a1a1d] stroke-1" />
          </pattern>
          <pattern id={`${id}-major`} x={originX} y={originY} width={cell} height={cell} patternUnits="userSpaceOnUse">
            <path d={`M0 0H${cell}M0 0V${cell}`} className="fill-none stroke-[#313439] stroke-1" />
          </pattern>
        </defs>
        <rect width="100%" height="100%" fill={`url(#${id}-minor)`} />
        <rect width="100%" height="100%" fill={`url(#${id}-major)`} />
        <line x1={originX} y1="0" x2={originX} y2={originY} className="stroke-[#223a25]" />
        <line x1={originX} y1={originY} x2="100%" y2={originY} className="stroke-[#3d161b]" />
        <g transform={`translate(${originX} ${originY})`} className="fill-none stroke-[#b5b7b9]">
          <path d="M-3-3h6v6h-6zM0 0V-28M0 0H29" />
          <path d="M1-37l3 3.500l3-3.500M4-33.500V-30M31-7l7 7M38-7l-7 7" />
        </g>
        {children}
      </svg>

      <div className="absolute right-1 top-1 flex gap-1 text-[#e4e4e4]">
        <IconButton label="Minimize drawing" className="w-2 pt-1"><Minus className="w-2 h-2 stroke-5" /></IconButton>
        <IconButton label="Restore drawing" className="w-2">
          <Glyph className="w-2 h-2"><path className="stroke-[#e4e4e4] stroke-3" d="M3 9h12v12H3zM9 9V3h12v12h-6" /></Glyph>
        </IconButton>
        <IconButton label="Close drawing" className="w-2"><X className="w-2 h-2 stroke-4" /></IconButton>
      </div>
      <ViewCube />
      <NavigationBar />
      {overlay}
    </main>
  );
}

function ViewCube() {
  return (
    <div className="absolute right-[7px] top-5 flex flex-col items-center">
      <svg viewBox="0 0 72 72" className="w-[72px] h-[72px] font-['Liberation_Sans',sans-serif] font-bold">
        <circle cx="36" cy="36" r="28" className="fill-none stroke-[#3a3a3c] stroke-[6px]" />
        <path d="M22 22h28v28H22z" className="fill-[#b9babb]" />
        <path d="M27 27h18v18H27z" className="fill-[#aab2b2]" />
        <text x="36" y="38" textAnchor="middle" className="text-[7px] font-['Lato',sans-serif] fill-[#3b474c]">TOP</text>
        <g className="text-[11px] fill-[#b9babb]" textAnchor="middle">
          <text x="36" y="11">N</text>
          <text x="36" y="69">S</text>
          <text x="7" y="40">W</text>
          <text x="65" y="40">E</text>
        </g>
      </svg>
      <button type="button" className="w-[26px] h-[9px] mt-2.5 pr-2 rounded-[2px] bg-[#9c9ba9] text-[6px] leading-[9px] font-bold text-[#797886]">
        WCS
      </button>
    </div>
  );
}

function NavigationBar() {
  return (
    <div className="absolute right-px top-[125px] w-[19px] h-[119px] rounded-[2px] bg-[#545456]">
      <svg viewBox="0 0 57 357" className="w-full h-full fill-none stroke-[#434346] stroke-3">
        <circle cx="28" cy="49" r="16" />
        <circle cx="28" cy="49" r="8" />
        <path d="M10 74h36" />
        <path d="M14 125c0-20 24-22 30-8 4 12-6 24-18 22zM24 84h8" />
        <path d="M12 152l22 24M34 152L12 176" />
        <circle cx="38" cy="172" r="7" />
        <path d="M42 178l8 10M24 204h8" />
        <path d="M28 220v40M10 240h36M22 226l6-8 6 8M22 254l6 8 6-8M24 270h8" />
        <path d="M12 288h14v14H12zM32 288h12M12 310h30v20H12zM24 314l8 6-8 6zM46 12h6M44 348h8" />
      </svg>
    </div>
  );
}

/* ---------- layout tabs and status bar ---------- */

const TOGGLE = "w-[13px] h-[13px]";
const ON = "bg-[#4f86b5]";

function StatusBar({ ortho }: { ortho?: boolean }) {
  return (
    <footer className="flex items-center h-5 border-t-2 border-[#434c57] bg-[#2a3038] text-[#b9bec5]">
      <IconButton label="Layout menu" className="w-[24px] pl-[4px]"><Menu className="w-3 h-3" /></IconButton>
      <button type="button" className="self-stretch px-[9px] bg-[#3f4852] font-bold text-white [clip-path:polygon(6px_0,100%_0,calc(100%-6px)_100%,0_100%)]">
        Model
      </button>
      <button type="button" className="px-1">Layout1</button>
      <Slash />
      <button type="button" className="px-1">Layout2</button>
      <Slash />
      <IconButton label="New layout" className="w-[17px]"><Plus className="w-[11px] h-[11px]" /></IconButton>
      <Slash />

      <div className="relative flex items-center h-full ml-auto pr-1 bg-[#2f3740]">
        <button type="button" className="w-[28px] text-left text-[#dfe2e5]">MODEL</button>
        <IconButton label="Grid" className={clsx(TOGGLE, ON)}>
          <Glyph className="w-[9px] h-[9px]"><path className="stroke-[#e8eef3]" d="M5 1v22M12 1v22M19 1v22M1 5h22M1 12h22M1 19h22" /></Glyph>
        </IconButton>
        <IconButton label="Snap" className="w-[17px]">
          <Glyph className="w-[9px] h-[9px]"><path className="stroke-4 [stroke-dasharray:4_5]" d="M1 4h23M1 13h23M1 22h23" /></Glyph>
        </IconButton>
        <Caret className="mr-[3px]" />
        <IconButton label="Ortho" className={clsx(TOGGLE, ortho && ON)}>
          <Glyph className="w-[9px] h-[9px]"><path d="M3 2v19h20M3 14h7v7" /></Glyph>
        </IconButton>
        <IconButton label="Polar tracking" className="w-[17px]">
          <Glyph className="w-[9px] h-[9px]"><path d="M17 5A9 9 0 1 0 20 14M11 13h12M11 13L19 3" /></Glyph>
        </IconButton>
        <Caret />
        <IconButton label="Isodraft" className="w-[17px]">
          <Glyph className="w-[9px] h-[9px]"><path className="stroke-[#8c939b]" d="M12 1v22M4 4l14 16" /></Glyph>
        </IconButton>
        <Caret className="mr-[3px]" />
        <IconButton label="Object snap tracking" className={clsx(TOGGLE, ON)}>
          <Glyph className="w-[9px] h-[9px]"><path className="stroke-[#e8eef3]" d="M22 2L4 20h18" /></Glyph>
        </IconButton>
        <IconButton label="Object snap" className={clsx(TOGGLE, ON, "ml-px")}>
          <Glyph className="w-[9px] h-[9px]"><path className="stroke-[#e8eef3]" d="M5 5h17v17H5zM1 1h6v6H1z" /></Glyph>
        </IconButton>
        <Caret className="mx-[3px]" />
        {["Annotation visibility", "Auto scale", "Annotation scale"].map((name, i) => (
          <IconButton key={name} label={name} className={clsx("w-[14px] h-[13px]", i === 0 && ON)}>
            <Glyph className="w-[10px] h-[10px]">
              <path className="fill-[#e3e5e8] stroke-none" d="M12 1c3 0 3 5 2 8l8 14-10-7L2 23l8-14c-1-3-1-8 2-8z" />
              {i < 2 && <path d="M18 3h4M17 7l3 2" />}
            </Glyph>
          </IconButton>
        ))}
        <button type="button" className="flex items-center gap-px pl-px font-bold">1:1<Caret /></button>
        <IconButton label="Workspace" className="w-[19px] text-[10px] text-[#dfe2e5]"><FaCog /></IconButton>
        <Caret />
        <IconButton label="Annotation monitor" className="w-[17px]"><Plus className="w-3 h-3" /></IconButton>
        <IconButton label="Isolate objects" className="w-[15px]">
          <Glyph className="w-[11px] h-[11px]"><path d="M2 3h8v7H2zM14 5h8v7h-8z" /><circle cx="11" cy="18" r="4" /></Glyph>
        </IconButton>
        <IconButton label="Plot status" className="w-[15px]">
          <Glyph className="w-[10px] h-[10px]"><path className="fill-[#dfe2e5] stroke-none" d="M5 1h16v18H2V10h3z" /><path className="fill-[#e0973c] stroke-none" d="M9 8h7v12H9z" /></Glyph>
        </IconButton>
        <IconButton label="Graphics performance" className="w-[12px]">
          <Glyph className="w-[10px] h-[10px]"><path className="fill-[#4f9ad4] stroke-none" d="M1 2h12v12H1z" /><path className="fill-[#e0b843] stroke-none" d="M10 12h13l-6 11z" /></Glyph>
        </IconButton>
        <IconButton label="Clean screen" className="w-[15px]"><Glyph className="w-[10px] h-[10px]"><path d="M2 5h20v14H2z" /></Glyph></IconButton>
        <IconButton label="Customization" className="w-[13px]"><Menu className="w-[11px] h-[11px]" /></IconButton>
        <span className="absolute right-1 top-0.5 text-[10px] leading-3 text-[#d9dbdd]/80 pointer-events-none">ûdemy</span>
      </div>
    </footer>
  );
}

/* ---------- windows ---------- */

function WheelWindow() {
  return (
    <section>
      <TitleBar file="C:\Users\MAC\Videos\Nueva carpeta\...\BASIC A_Pieza2.dwg" />
      <RibbonTabs />
      <Ribbon />
      <FileTabs files={["EJERCICIO DIFICIL 2*"]} active="BASIC A_Pieza2*" />
      <ModelSpace id="wheel" originX={15.5} originY={356.5} cell={49}>
        <PipeLogo id="pipe-a" x={54} y={62} scale={1} />
        <Wheel
          x={291}
          y={187}
          arc={327}
          bottom={302}
          axes={[[0, -389], [0, 388], [-342, 0], [386, 0]]}
          web={[-56, -133]}
          leaders={WHEEL_A}
          marks={["M24 78C2 86 2 114 21 121"]}
        />
        <Wheel
          x={582}
          y={187}
          arc={306}
          bottom={305}
          axes={[[0, -341], [0, 340], [-340, 0], [340, 0]]}
          web={[-53, -124]}
          leaders={WHEEL_B}
          marks={["M-116 76C-105 87-82 84-71 71", "M51 84C66 106 46 126 23 121", "M-75-144l11 27", "M-50-154l9 25"]}
        />
        <rect x="454.500" y="70.500" width="255" height="234" className="fill-none stroke-[#66686b] [stroke-dasharray:9_4]" />
        <g className="fill-none stroke-[#a7a9ab]">
          <path d="M739 74.500h20M763 74.500h20M761.500 52v20M761.500 77v20" />
          <circle cx="761" cy="74.500" r="2" />
        </g>
      </ModelSpace>
      <StatusBar />
    </section>
  );
}

function BracketWindow() {
  return (
    <section>
      <TitleBar file="BASIC A.dwg" />
      <RibbonTabs />
      <Ribbon />
      <FileTabs files={[]} active="BASIC A*" />
      <ModelSpace
        id="bracket"
        originX={18.5}
        originY={356.5}
        cell={52.4}
        overlay={
          <div className="absolute left-[548px] top-[269px] flex items-center gap-0.5 h-3 leading-3">
            <label htmlFor="dim-x" className="flex items-center justify-between w-[125px] h-3 px-0.5 bg-[#a2a2a3] text-[#29292b] whitespace-nowrap">
              Specify dimension line location or
              <span className="w-[5px] h-[5px] mx-0.5 border border-[#e6e6e6]" />
            </label>
            <input id="dim-x" defaultValue="498.9802" className="w-[34px] h-3 px-0.5 bg-[#1878ba] border border-white text-[#9ed2f0]" />
            <input aria-label="Y coordinate" defaultValue="91.7801" className="w-[30px] h-3 px-0.5 bg-[#a2a2a3] text-[#29292b]" />
          </div>
        }
      >
        <PipeLogo id="pipe-b" x={60} y={42} scale={1.06} />
        <Bracket
          x={307}
          y={203}
          arc={354}
          tip={340}
          top={-394}
          base={156}
          angleLabel={[330, -130]}
          leaders={BRACKET_A}
        />
        <Bracket
          x={597}
          y={197}
          arc={338}
          tip={328}
          top={-379}
          base={170}
          angleLabel={[297, -168]}
          leaders={BRACKET_B}
        >
          <path d="M-237 193H-102M-169 125V258M-169 193L-159 113M-166 113h14M-159 106v14M-225 127h14M-218 120v14" />
          <Label at={[-171, 192]} angle={-80}>R4</Label>
        </Bracket>
        <rect x="464.500" y="52.500" width="262" height="237" className="fill-none stroke-[#66686b] [stroke-dasharray:9_4]" />
      </ModelSpace>
      <StatusBar ortho />
    </section>
  );
}

export default function App() {
  return (
    <div className="relative h-screen overflow-hidden bg-[#0e0e10] text-[7px] leading-[9px] font-['Lato','Noto_Sans',sans-serif]">
      <WheelWindow />
      <BracketWindow />
      <aside className="absolute right-[7px] bottom-1.5 flex flex-col items-center w-[138px] h-10 rounded-[3px] bg-[#ececec] text-[#161616]">
        <span className="text-[26px] leading-[26px] font-light font-['Inter',sans-serif]">CGer.com</span>
        <span className="text-[13px] leading-[13px] font-['Lato','Noto_Sans_CJK_SC',sans-serif]">CG资源&nbsp; CG网站</span>
      </aside>
    </div>
  );
}
